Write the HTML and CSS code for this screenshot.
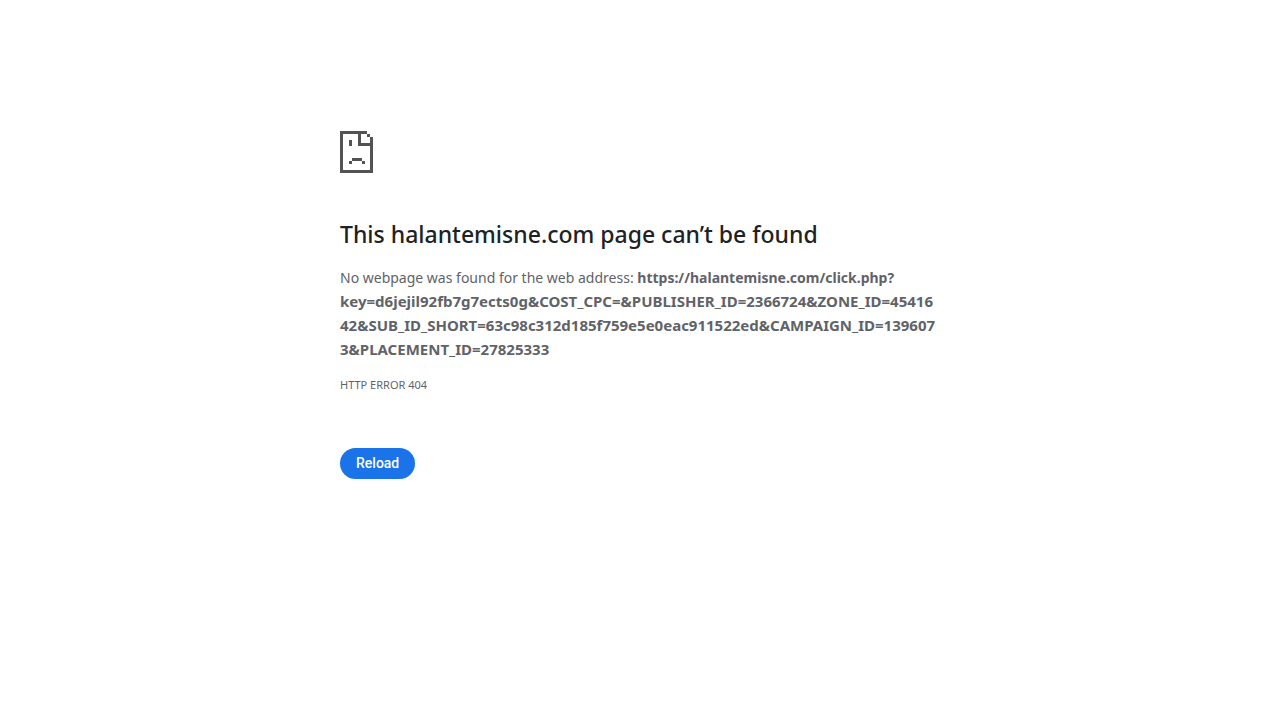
FILE: index.html
```html
<!DOCTYPE html>
<html lang="en">
<head>
    <meta charset="UTF-8">
    <meta name="viewport" content="width=device-width, initial-scale=1.0">
    <title>halantemisne.com</title>
    <link rel="stylesheet" href="styles.css">
</head>
<body>
    <main class="interstitial">
        <svg class="icon" viewBox="0 0 33 42" aria-hidden="true" shape-rendering="crispEdges">
            <path d="M0 0H27V3H21V12H33V42H0ZM3 3V39H30V15H18V3Z" fill-rule="evenodd"/>
            <path d="M27 3h3v3h-3zM30 6h3v6h-3zM9 9h3v6H9zM12 27h10v3H12zM9 30h3v3H9zM22 30h3v3h-3z"/>
        </svg>
        <h1>This halantemisne.com page can’t be found</h1>
        <p class="summary">No webpage was found for the web address: <strong>https://halantemisne.com/click.php?<wbr><span class="query">key=d6jejil92fb7g7ects0g&amp;COST_CPC=&amp;PUBLISHER_ID=2366724&amp;ZONE_ID=45416<wbr>42&amp;SUB_ID_SHORT=63c98c312d185f759e5e0eac911522ed&amp;CAMPAIGN_ID=139607<wbr>3&amp;PLACEMENT_ID=27825333</span></strong></p>
        <p class="error-code">HTTP ERROR 404</p>
        <button type="button" class="reload" onclick="location.reload()">Reload</button>
    </main>
</body>
</html>
```
FILE: styles.css
```css
body {
    margin: 0;
    background-color: #fff;
    color: #5f6368;
    font-family: "Segoe UI", "Noto Sans", sans-serif;
    font-size: 14px;
    line-height: 24px;
}

.interstitial {
    box-sizing: border-box;
    max-width: 600px;
    margin: 0 auto;
    padding-top: 131px;
}

.icon {
    display: block;
    width: 33px;
    height: 42px;
    margin-bottom: 46px;
    fill: #535353;
}

h1 {
    margin: 0 0 16px;
    color: #202124;
    font-size: 23px;
    font-weight: 500;
    line-height: 31px;
}

.summary {
    margin: 0 0 11px;
}

.query {
    font-size: 15px;
    line-height: 20px;
}

.error-code {
    margin: 0;
    font-size: 11px;
}

.reload {
    display: block;
    margin-top: 51px;
    padding: 8px 16px;
    border: 0;
    border-radius: 16px;
    background-color: #1a73e8;
    color: #fff;
    font-family: Roboto, sans-serif;
    font-size: 14px;
    font-weight: 500;
    line-height: 15px;
    cursor: pointer;
}
```
